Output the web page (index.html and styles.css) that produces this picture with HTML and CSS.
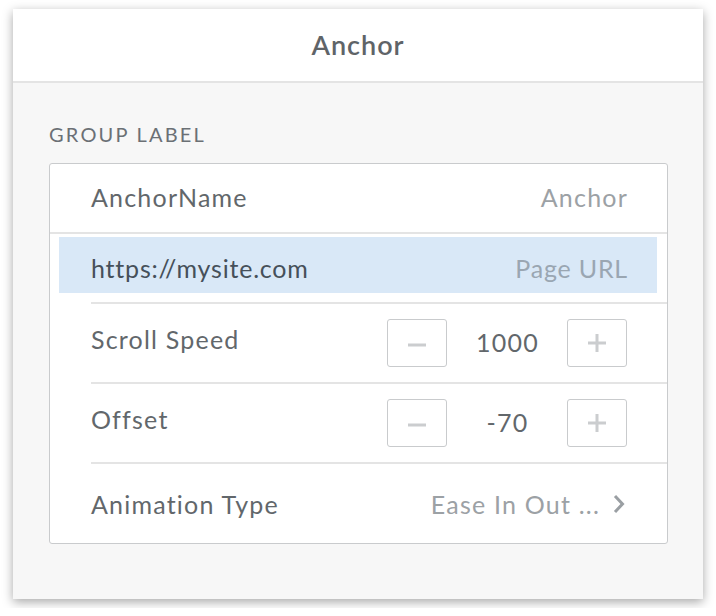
FILE: index.html
```html
<!DOCTYPE html>
<html lang="en">
<head>
  <meta charset="UTF-8" />
  <title>Anchor</title>
  <link rel="stylesheet" href="styles.css">
</head>
<body>
  <div class="panel">
    <div class="panel-header">Anchor</div>
    <div class="panel-body">
      <div class="group-label">Group Label</div>
      <div class="group">
        <div class="row">
          <span class="row-label">AnchorName</span>
          <span class="row-value">Anchor</span>
        </div>
        <div class="row row-input">
          <div class="field">
            <span class="field-text">https://mysite.com</span>
            <span class="field-placeholder">Page URL</span>
          </div>
        </div>
        <div class="row row-stepper">
          <span class="row-label">Scroll Speed</span>
          <div class="stepper">
            <button class="step-btn" aria-label="Decrease">
              <svg width="20" height="20" viewBox="0 0 20 20"><path d="M1 10h18" /></svg>
            </button>
            <span class="step-value">1000</span>
            <button class="step-btn" aria-label="Increase">
              <svg width="20" height="20" viewBox="0 0 20 20"><path d="M1 10h18M10 1v18" /></svg>
            </button>
          </div>
        </div>
        <div class="row row-stepper">
          <span class="row-label">Offset</span>
          <div class="stepper">
            <button class="step-btn" aria-label="Decrease">
              <svg width="20" height="20" viewBox="0 0 20 20"><path d="M1 10h18" /></svg>
            </button>
            <span class="step-value">-70</span>
            <button class="step-btn" aria-label="Increase">
              <svg width="20" height="20" viewBox="0 0 20 20"><path d="M1 10h18M10 1v18" /></svg>
            </button>
          </div>
        </div>
        <div class="row row-last">
          <span class="row-label">Animation Type</span>
          <span class="row-value">Ease In Out ...
            <svg class="chevron" width="14" height="20" viewBox="0 0 14 20"><path d="M3 2l7.5 8L3 18" /></svg>
          </span>
        </div>
      </div>
    </div>
  </div>
</body>
</html>
```

FILE: styles.css
```css
:root {
  --text: #62676b;
  --text-light: #9ca1a5;
  --line: #e4e4e4;
  --border: #c9cbcd;
  --highlight: #d9e8f7;
}

* {
  box-sizing: border-box;
  margin: 0;
  padding: 0;
}

body {
  background: #ffffff;
  font-family: 'Lato', 'Open Sans', sans-serif;
  color: var(--text);
  padding: 9px 13px;
}

.panel {
  width: 690px;
  height: 590px;
  background: #f7f7f7;
  box-shadow: 0 3px 10px rgba(0, 0, 0, 0.35);
}

/* Title bar */
.panel-header {
  height: 74px;
  background: #ffffff;
  border-bottom: 2px solid var(--line);
  display: flex;
  align-items: center;
  justify-content: center;
  font-size: 27px;
  font-weight: 600;
  letter-spacing: 1px;
  color: #5f6468;
  padding-bottom: 2px;
}

.panel-body {
  padding: 40px 35px 0 36px;
}

.group-label {
  text-transform: uppercase;
  font-size: 20px;
  line-height: 22px;
  letter-spacing: 2.2px;
  color: #6b7075;
  margin-bottom: 18px;
}

.group {
  background: #ffffff;
  border: 1.5px solid var(--border);
  border-radius: 3px;
}

.row {
  display: flex;
  align-items: center;
  justify-content: space-between;
  height: 68px;
  margin-left: 41px;
  padding-right: 39px;
  padding-bottom: 2px;
  font-size: 25px;
  letter-spacing: 1.2px;
}
.row + .row {
  border-top: 2px solid var(--line);
}

.row-label {
  color: var(--text);
}
.row-value {
  color: var(--text-light);
  display: flex;
  align-items: center;
  gap: 12px;
}

/* Highlighted url input */
.row-input {
  height: 70px;
  margin-left: 0;
  padding: 3px 10px 9px 9px;
  align-items: stretch;
  letter-spacing: 0.8px;
}
.field {
  flex: 1;
  background: var(--highlight);
  display: flex;
  align-items: center;
  justify-content: space-between;
  padding: 5px 29px 0 32px;
}
.field-text {
  color: #46505a;
}
.field-placeholder {
  color: #9aa6b2;
}

/* Number steppers */
.row-stepper {
  height: 80px;
  padding-bottom: 0;
}
.row-stepper .row-label {
  padding-bottom: 9px;
}
.stepper {
  display: flex;
  align-items: center;
  margin-right: 1px;
}
.step-btn {
  width: 60px;
  height: 48px;
  border: 1.5px solid var(--border);
  border-radius: 3px;
  background: #ffffff;
  display: flex;
  align-items: center;
  justify-content: center;
}
.step-btn svg {
  stroke: #cbcdcf;
  stroke-width: 3;
  fill: none;
}
.step-btn:first-child svg {
  margin-top: 4px;
}
.step-value {
  width: 120px;
  text-align: center;
  color: var(--text);
  padding-left: 1px;
  padding-bottom: 2px;
}

.row-last {
  height: 81px;
  padding-bottom: 0;
}
.row-last .row-label {
  padding-top: 1px;
}
.row-last .row-value {
  padding-top: 1px;
  margin-right: 2px;
}
.chevron {
  stroke: #9a9fa3;
  stroke-width: 3;
  fill: none;
}
```
